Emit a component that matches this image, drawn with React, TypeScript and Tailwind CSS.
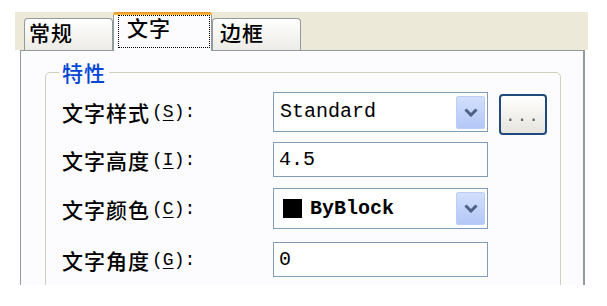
const CJK = "font-['Noto_Sans_CJK_SC',sans-serif] font-medium";
const MONO = "font-['Liberation_Mono',monospace]";

function Label({ text, hotkey, height }: { text: string; hotkey: string; height: number }) {
  return (
    <div className="flex w-[211px] items-center text-black" style={{ height }}>
      <span className={`${CJK} text-[21px] leading-[20px] tracking-[1px]`}>{text}</span>
      <span className={`${MONO} ml-[2px] text-[18px] leading-[20px]`}>
        (<span className="underline underline-offset-[3px]">{hotkey}</span>):
      </span>
    </div>
  );
}

function Chevron() {
  return (
    <svg width="14" height="9" viewBox="0 0 14 9">
      <path d="M1.5 1.5 L7 7 L12.5 1.5" fill="none" stroke="#4d6185" strokeWidth="3" />
    </svg>
  );
}

function Combo({ height, children }: { height: number; children: React.ReactNode }) {
  return (
    <div
      className="flex w-[215px] items-center border border-[#7f9db9] bg-white pl-[6px] pr-[2px]"
      style={{ height }}
    >
      <div className="flex flex-1 items-center">{children}</div>
      <div className="flex h-[33px] w-[29px] items-center justify-center rounded-[2px] border border-[#bccdf6] bg-gradient-to-b from-[#d3dffd] to-[#b3c7f6]">
        <Chevron />
      </div>
    </div>
  );
}

function TextBox({ value }: { value: string }) {
  return (
    <div
      className={`flex h-[35px] w-[215px] items-center border border-[#7f9db9] bg-white pl-[5px] ${MONO} text-[20px] text-black`}
    >
      {value}
    </div>
  );
}

export default function App() {
  return (
    <div className="h-[306px] w-[607px] bg-white pl-[15px] pt-[12px]">
      {/* tab strip */}
      <div className="flex h-[38px] w-[573px] items-end bg-[#ece9d8] pl-[9px]">
        <div className="h-[32px] w-[89px] rounded-t-[4px] border border-b-0 border-[#919b9c] bg-gradient-to-b from-white to-[#ecebe6] pl-[4px] pt-[3px]">
          <span className={`${CJK} text-[21px] leading-[20px] tracking-[1px] text-black`}>常规</span>
        </div>
        <div className="relative z-10 -mb-px flex h-[39px] w-[99px] flex-col">
          <div className="h-[3px] rounded-t-[3px] bg-gradient-to-b from-[#e08a2a] to-[#ffc43c]" />
          <div className="flex-1 border-x border-[#919b9c] bg-[#fcfcfe] pl-[4px]">
            <div className="h-[33px] w-[92px] border border-dotted border-black pl-[8px] pt-[1px]">
              <span className={`${CJK} text-[21px] leading-[20px] tracking-[1px] text-black`}>文字</span>
            </div>
          </div>
        </div>
        <div className="h-[32px] w-[89px] rounded-t-[4px] border border-b-0 border-[#919b9c] bg-gradient-to-b from-white to-[#ecebe6] pl-[7px] pt-[3px]">
          <span className={`${CJK} text-[21px] leading-[20px] tracking-[1px] text-black`}>边框</span>
        </div>
      </div>

      {/* page */}
      <div className="ml-[5px] h-[235px] w-[565px] overflow-hidden border-l border-r-2 border-t border-[#919b9c] bg-[#fcfcfe] pl-[24px] pt-[11px]">
        <fieldset className="h-[280px] w-[516px] rounded-[5px] border border-[#d0d0bf] pl-[16px]">
          <legend className={`${CJK} ml-[-3px] px-[3px] text-[21px] leading-[20px] tracking-[1px] text-[#0046d5]`}>
            特性
          </legend>

          <div className="mt-[10px] flex items-start">
            <Label text="文字样式" hotkey="S" height={40} />
            <Combo height={40}>
              <span className={`${MONO} text-[20px] text-black`}>Standard</span>
            </Combo>
            <button
              type="button"
              className={`ml-[11px] mt-[2px] h-[41px] w-[48px] rounded-[4px] border-2 border-[#1f4a7e] bg-gradient-to-b from-white to-[#e6e4dc] pt-[4px] ${MONO} text-[16px] leading-[16px] tracking-[2px] text-[#555]`}
            >
              ...
            </button>
          </div>

          <div className="mt-[7px] flex items-start">
            <Label text="文字高度" hotkey="I" height={35} />
            <TextBox value="4.5" />
          </div>

          <div className="mt-[11px] flex items-start">
            <Label text="文字颜色" hotkey="C" height={41} />
            <Combo height={41}>
              <span className="mr-[8px] ml-[3px] h-[19px] w-[19px] bg-black" />
              <span className={`${MONO} text-[20px] font-bold text-black`}>ByBlock</span>
            </Combo>
          </div>

          <div className="mt-[13px] flex items-start">
            <Label text="文字角度" hotkey="G" height={35} />
            <TextBox value="0" />
          </div>
        </fieldset>
      </div>
    </div>
  );
}
